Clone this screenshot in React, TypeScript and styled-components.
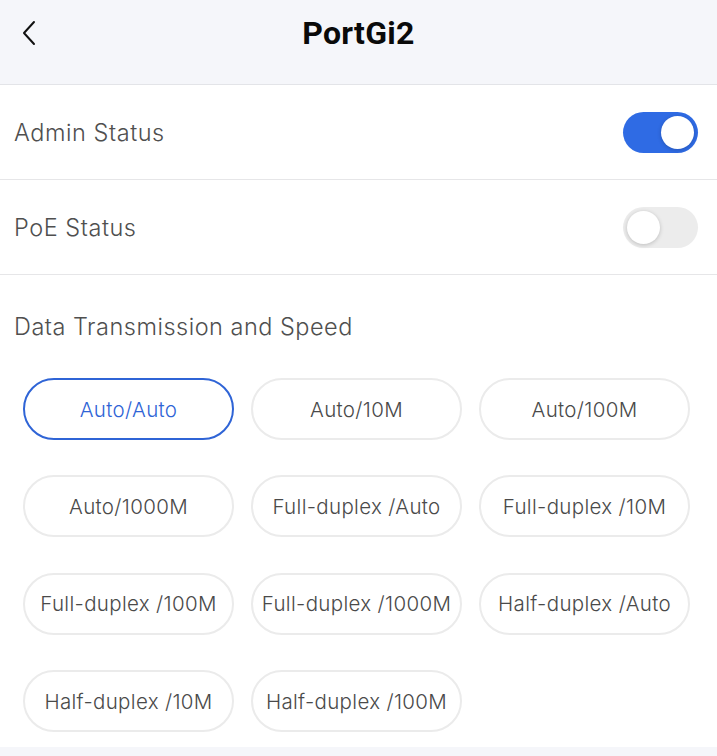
import React, { useState } from "react";
import styled, { createGlobalStyle } from "styled-components";

const Global = createGlobalStyle`
  html, body { margin: 0; padding: 0; background: #ffffff; }
  body { font-family: Inter, "Liberation Sans", sans-serif; -webkit-font-smoothing: antialiased; }
  * { box-sizing: border-box; }
`;

const Page = styled.div`
  width: 717px;
  height: 756px;
  display: flex;
  flex-direction: column;
  background: #f5f6fa;
  overflow: hidden;
`;

const Header = styled.header`
  height: 85px;
  flex-shrink: 0;
  background: #f5f6fa;
  border-bottom: 1px solid #e3e4e8;
  display: grid;
  grid-template-columns: 60px 1fr 60px;
  align-items: start;
`;

const BackButton = styled.button`
  height: 66px;
  border: none;
  background: transparent;
  padding: 0 0 0 21px;
  display: flex;
  align-items: center;
  cursor: pointer;
`;

const Title = styled.h1`
  margin: 0;
  height: 66px;
  line-height: 66px;
  text-align: center;
  font-family: Roboto, "Liberation Sans", sans-serif;
  font-weight: 700;
  font-size: 32px;
  letter-spacing: 0.3px;
  color: #0a0a0a;
`;

const Content = styled.main`
  background: #ffffff;
  flex: 1;
  display: flex;
  flex-direction: column;
`;

const Row = styled.div`
  height: 95px;
  flex-shrink: 0;
  display: flex;
  align-items: center;
  justify-content: space-between;
  padding: 0 19px 0 14px;
  border-bottom: 1px solid #e6e6e8;
`;

const Label = styled.span`
  font-size: 23.5px;
  letter-spacing: 0.55px;
  color: #4f4f4f;
  font-weight: 300;
`;

const Track = styled.button<{ $on: boolean }>`
  width: 75px;
  height: 41px;
  border-radius: 21px;
  border: none;
  padding: 4px;
  display: flex;
  justify-content: ${(p) => (p.$on ? "flex-end" : "flex-start")};
  align-items: center;
  background: ${(p) => (p.$on ? "#2f6be4" : "#ececec")};
  cursor: pointer;
`;

const Knob = styled.span`
  width: 33px;
  height: 33px;
  border-radius: 50%;
  background: #ffffff;
  box-shadow: 0 1px 4px rgba(0, 0, 0, 0.2);
`;

const Section = styled.section`
  padding: 39px 27px 15px 23px;
`;

const SectionTitle = styled.h2`
  margin: 0 0 38px -9px;
  font-size: 23.5px;
  letter-spacing: 0.5px;
  font-weight: 300;
  color: #4f4f4f;
  line-height: 26px;
`;

const Grid = styled.div`
  display: grid;
  grid-template-columns: repeat(3, 1fr);
  column-gap: 17px;
  row-gap: 35.4px;
`;

const Option = styled.button<{ $active: boolean }>`
  height: 62px;
  border-radius: 31px;
  background: #ffffff;
  border: 2px solid ${(p) => (p.$active ? "#2f64d6" : "#ebebeb")};
  color: ${(p) => (p.$active ? "#2f64d6" : "#4a4a4a")};
  font-family: Inter, "Liberation Sans", sans-serif;
  font-weight: 300;
  font-size: 20.5px;
  letter-spacing: 0.33px;
  white-space: nowrap;
  padding: 0;
  cursor: pointer;
`;

const Footer = styled.div`
  flex: 1;
  background: #f5f6fa;
`;

const options = [
  "Auto/Auto",
  "Auto/10M",
  "Auto/100M",
  "Auto/1000M",
  "Full-duplex /Auto",
  "Full-duplex /10M",
  "Full-duplex /100M",
  "Full-duplex /1000M",
  "Half-duplex /Auto",
  "Half-duplex /10M",
  "Half-duplex /100M",
];

export default function App() {
  const [admin, setAdmin] = useState(true);
  const [poe, setPoe] = useState(false);
  const [sel, setSel] = useState(0);
  return (
    <Page>
      <Global />
      <Header>
        <BackButton aria-label="Back">
          <svg width="16" height="26" viewBox="0 0 16 26" fill="none">
            <path d="M13 2 L3 13 L13 24" stroke="#111" strokeWidth="2" strokeLinecap="round" strokeLinejoin="round" />
          </svg>
        </BackButton>
        <Title>PortGi2</Title>
        <div />
      </Header>
      <Content>
        <Row>
          <Label>Admin Status</Label>
          <Track $on={admin} onClick={() => setAdmin(!admin)}>
            <Knob />
          </Track>
        </Row>
        <Row>
          <Label>PoE Status</Label>
          <Track $on={poe} onClick={() => setPoe(!poe)}>
            <Knob />
          </Track>
        </Row>
        <Section>
          <SectionTitle>Data Transmission and Speed</SectionTitle>
          <Grid>
            {options.map((o, i) => (
              <Option key={o} $active={i === sel} onClick={() => setSel(i)}>
                {o}
              </Option>
            ))}
          </Grid>
        </Section>
        <Footer />
      </Content>
    </Page>
  );
}
